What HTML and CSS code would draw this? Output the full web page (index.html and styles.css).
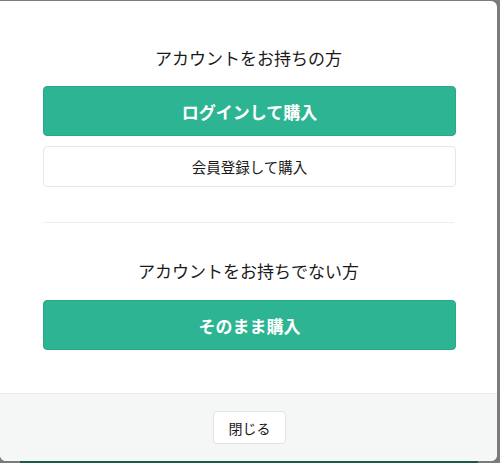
FILE: index.html
```html
<!DOCTYPE html>
<html lang="ja">
<head>
<meta charset="utf-8">
<link rel="stylesheet" href="styles.css">
</head>
<body>
<div class="backdrop">
  <div class="modal">
    <div class="modal-body">
      <section class="group">
        <h2 class="group-title">アカウントをお持ちの方</h2>
        <button class="btn btn-primary">ログインして購入</button>
        <button class="btn btn-outline">会員登録して購入</button>
      </section>
      <hr class="divider">
      <section class="group group-guest">
        <h2 class="group-title">アカウントをお持ちでない方</h2>
        <button class="btn btn-primary">そのまま購入</button>
      </section>
    </div>
    <div class="modal-footer">
      <button class="btn-close">閉じる</button>
    </div>
  </div>
  <div class="page-strip"></div>
</div>
</body>
</html>
```

FILE: styles.css
```css
* { box-sizing: border-box; }
html, body {
  margin: 0;
  padding: 0;
  width: 500px;
  height: 463px;
  overflow: hidden;
  background: #7b7b7b;
  font-family: "Noto Sans CJK JP", "Noto Sans", sans-serif;
  color: #1f1f1f;
}
.backdrop {
  padding-top: 1px;
  display: flex;
  flex-direction: column;
  align-items: flex-start;
}
.modal {
  width: 497px;
  height: 460px;
  background: #fff;
  border-radius: 0 6px 6px 6px;
  overflow: hidden;
  display: flex;
  flex-direction: column;
}
.modal-body {
  flex: 1;
  padding: 44px 43px 0 43px;
  display: flex;
  flex-direction: column;
}
.group {
  display: flex;
  flex-direction: column;
}
.group-title {
  margin: 0 0 16px;
  font-size: 17px;
  line-height: 25px;
  font-weight: 400;
  text-align: center;
  color: #1a1a1a;
}
.group-guest .group-title {
  margin-bottom: 17px;
}
.btn {
  font-family: inherit;
  width: 413px;
  border-radius: 4px;
  cursor: pointer;
  padding: 0;
}
.btn-primary {
  height: 50px;
  background: #2db593;
  border: 1px solid #29a887;
  color: #fff;
  font-size: 17px;
  font-weight: 700;
}
.btn-outline {
  margin-top: 10px;
  height: 41px;
  background: #fff;
  border: 1px solid #e6e6e6;
  color: #1a1a1a;
  font-size: 14.5px;
  font-weight: 400;
}
.divider {
  margin: 35px 0 35px;
  border: 0;
  border-top: 1px solid #eeeeee;
  height: 0;
}
.modal-footer {
  height: 68px;
  background: #f5f7f6;
  border-top: 1px solid #ececec;
  display: flex;
  justify-content: center;
  align-items: center;
}
.btn-close {
  font-family: inherit;
  width: 73px;
  height: 33px;
  background: #fff;
  border: 1px solid #e3e3e3;
  border-radius: 4px;
  font-size: 14px;
  font-weight: 400;
  color: #1a1a1a;
  padding: 0;
  margin-left: 2px;
}
.page-strip {
  margin-left: 20px;
  width: 458px;
  height: 4px;
  background: #1d5a45;
}
```
